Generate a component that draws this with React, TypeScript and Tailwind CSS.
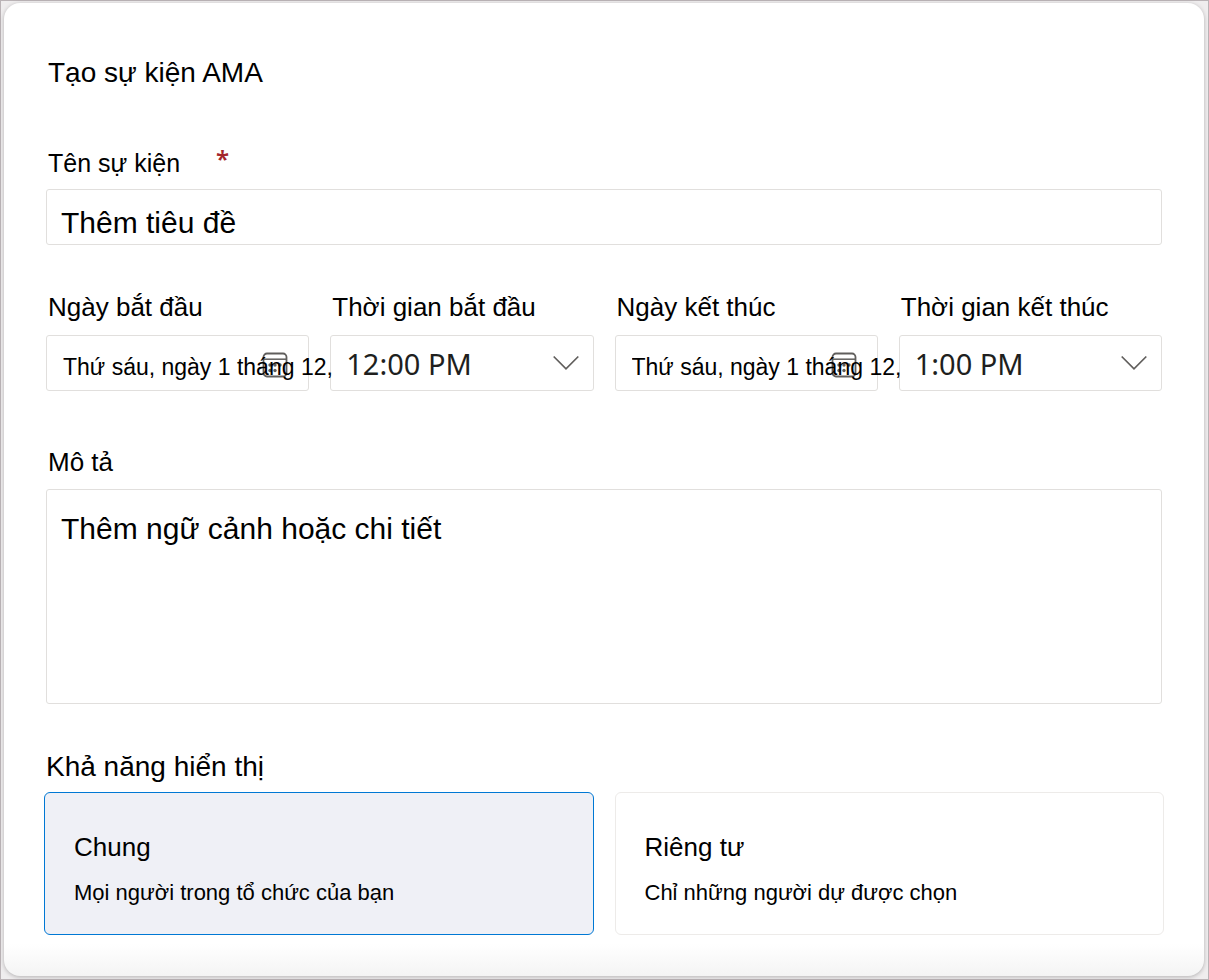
import React, { useState } from 'react';

const HOURS = ['12:00 PM', '1:00 PM', '2:00 PM', '3:00 PM'];

const VISIBILITY_OPTIONS = [
  { id: 'public', title: 'Chung', detail: 'Mọi người trong tổ chức của bạn' },
  { id: 'private', title: 'Riêng tư', detail: 'Chỉ những người dự được chọn' },
];

const CalendarIcon: React.FC = () => (
  <svg className="absolute top-4 right-5 h-[26px] w-[26px]" viewBox="0 0 26 26" fill="none" aria-hidden="true">
    <rect x="1.5" y="1.5" width="23" height="23" rx="3.5" stroke="#605e5c" strokeWidth="1.8" />
    <path d="M1.5 7.2H24.5" stroke="#605e5c" strokeWidth="1.5" />
    <g fill="#605e5c">
      <circle cx="8" cy="13" r="1.7" />
      <circle cx="13" cy="13" r="1.7" />
      <circle cx="18" cy="13" r="1.7" />
      <circle cx="8" cy="18.5" r="1.7" />
      <circle cx="13" cy="18.5" r="1.7" />
    </g>
  </svg>
);

const ChevronIcon: React.FC = () => (
  <svg className="pointer-events-none absolute top-[19px] right-3.5 h-4 w-[26px]" viewBox="0 0 26 16" fill="none" aria-hidden="true">
    <path d="M0.7 1.5L13 13.8L25.3 1.5" stroke="#605e5c" strokeWidth="1.7" />
  </svg>
);

const DateField: React.FC<{ id: string; label: string }> = ({ id, label }) => (
  <div className="min-w-0">
    <label htmlFor={id} className="block pl-0.5 text-[26px] leading-8 whitespace-nowrap">{label}</label>
    <div className="relative mt-3 flex h-14 rounded-[3px] border border-[#e1dfdd]">
      <CalendarIcon />
      {/* The long date runs past the right edge of the box */}
      <input
        id={id}
        type="text"
        defaultValue="Thứ sáu, ngày 1 tháng 12,"
        className="relative z-10 w-[300px] shrink-0 bg-transparent pt-2 pl-4 text-[23px] leading-8 outline-none"
      />
    </div>
  </div>
);

const TimeField: React.FC<{ id: string; label: string; value: string }> = ({ id, label, value }) => (
  <div className="min-w-0">
    <label htmlFor={id} className="block pl-0.5 text-[26px] leading-8 whitespace-nowrap">{label}</label>
    <div className="relative mt-3 h-14 rounded-[3px] border border-[#e1dfdd]">
      <select
        id={id}
        defaultValue={value}
        className="h-full w-full appearance-none bg-transparent pt-0.5 pl-[15px] font-['Noto_Sans','Open_Sans',sans-serif] text-[29px] text-[#201f1e] outline-none"
      >
        {HOURS.map((hour) => (
          <option key={hour}>{hour}</option>
        ))}
      </select>
      <ChevronIcon />
    </div>
  </div>
);

const App: React.FC = () => {
  const [visibility, setVisibility] = useState('public');

  return (
    <main className="min-h-screen border border-[#bab3b6] bg-[#efedee] px-[3px] pt-0.5 pb-[3px] font-['Liberation_Sans',Arial,sans-serif] text-black">
      <form className="mr-px rounded-2xl bg-white bg-linear-to-t from-[#f4f4f4] to-white to-[32px] px-[42px] pt-[52px] pb-[41px] shadow-[0_1px_4px_rgba(0,0,0,0.25)]">
        <h1 className="pl-0.5 text-[28px] leading-9">Tạo sự kiện AMA</h1>

        {/* Event name */}
        <div className="mt-14">
          <label htmlFor="name" className="flex gap-9 pl-0.5 text-[25px] leading-8">
            Tên sự kiện
            <span className="-mt-1 font-['Noto_Sans',sans-serif] text-[24px] font-semibold text-[#a4262c]">*</span>
          </label>
          <input
            id="name"
            type="text"
            required
            placeholder="Thêm tiêu đề"
            className="mt-2.5 block h-14 w-full rounded-[3px] border border-[#e1dfdd] px-3.5 pt-3 text-[30px] outline-none placeholder:text-black"
          />
        </div>

        {/* Start and end */}
        <div className="mt-[46px] grid grid-cols-4 gap-[21px]">
          <DateField id="start-date" label="Ngày bắt đầu" />
          <TimeField id="start-time" label="Thời gian bắt đầu" value="12:00 PM" />
          <DateField id="end-date" label="Ngày kết thúc" />
          <TimeField id="end-time" label="Thời gian kết thúc" value="1:00 PM" />
        </div>

        {/* Description */}
        <div className="mt-[55px]">
          <label htmlFor="description" className="block pl-0.5 text-[26px] leading-8">Mô tả</label>
          <textarea
            id="description"
            placeholder="Thêm ngữ cảnh hoặc chi tiết"
            className="mt-[11px] block h-[215px] w-full resize-none rounded-[3px] border border-[#e1dfdd] px-3.5 pt-[21px] text-[30px] leading-9 outline-none placeholder:text-black"
          />
        </div>

        {/* Visibility */}
        <fieldset className="-mx-0.5 mt-[47px]">
          <legend className="pl-0.5 text-[28px] leading-8">Khả năng hiển thị</legend>
          <div className="mt-[9px] grid grid-cols-2 gap-[21px]">
            {VISIBILITY_OPTIONS.map((option) => (
              <label
                key={option.id}
                className="relative rounded-md border border-[#edebe9] pt-[38px] pr-6 pb-[25px] pl-[29px] has-checked:border-[#0078d4] has-checked:bg-[#eff0f6]"
              >
                <input
                  type="radio"
                  name="visibility"
                  value={option.id}
                  checked={visibility === option.id}
                  onChange={() => setVisibility(option.id)}
                  className="sr-only"
                />
                <span className="block text-[26px] leading-8">{option.title}</span>
                <span className="mt-3.5 block text-[22px] leading-8">{option.detail}</span>
              </label>
            ))}
          </div>
        </fieldset>
      </form>
    </main>
  );
};

export default App;
